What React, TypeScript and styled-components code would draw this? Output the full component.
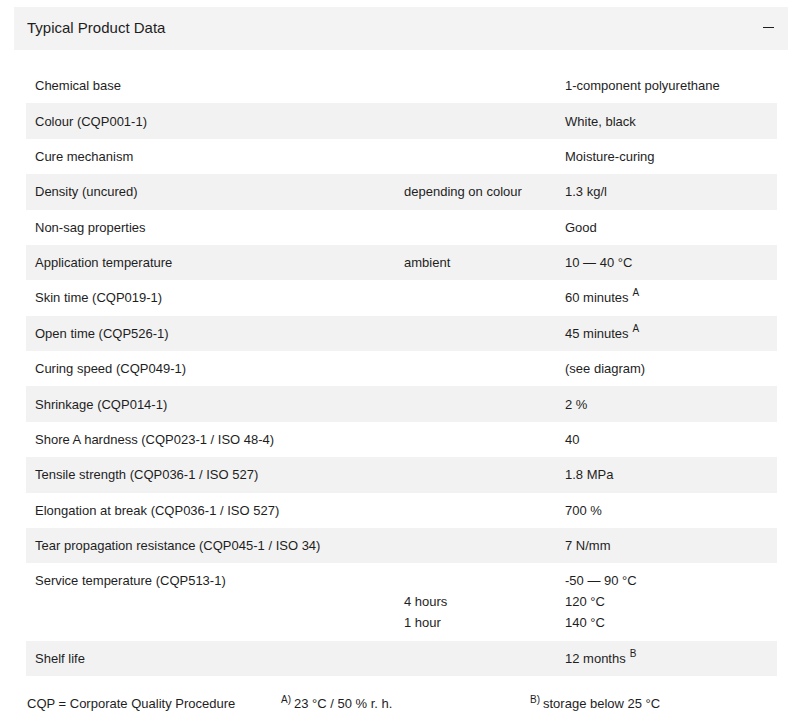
import React from "react";
import styled, { createGlobalStyle } from "styled-components";

const Global = createGlobalStyle`
  html, body { margin: 0; padding: 0; background: #fff; }
  body { font-family: "Liberation Sans", Arial, sans-serif; color: #1e1e1e; }
`;

const Page = styled.div`
  padding: 7px 0 0 14px;
  width: 788px;
  box-sizing: border-box;
`;

const Header = styled.div`
  display: flex;
  align-items: center;
  justify-content: space-between;
  height: 43px;
  background: #f3f3f3;
  padding: 0 14px 2px 13px;
  box-sizing: border-box;
`;

const Title = styled.h2`
  margin: 0;
  font-size: 15px;
  font-weight: normal;
  color: #1e1e1e;
`;

const Toggle = styled.span`
  display: block;
  width: 11px;
  height: 1.5px;
  background: #1e1e1e;
`;

const Table = styled.div`
  margin: 18px 11px 0 12px;
  display: flex;
  flex-direction: column;
`;

const Row = styled.div<{ $shade: boolean }>`
  display: grid;
  grid-template-columns: 369px 161px 1fr;
  background: ${(p) => (p.$shade ? "#f2f2f2" : "#fff")};
  padding: 7.2px 0;
  font-size: 13px;
  line-height: 21px;
`;

const Cell = styled.div`
  padding-left: 9px;
  display: flex;
  flex-direction: column;
`;

const Sup = styled.sup`
  font-size: 10px;
  line-height: 0;
  vertical-align: 6px;
  margin-left: 4px;
`;

const Footer = styled.div`
  display: grid;
  grid-template-columns: 254px 249px 1fr;
  margin: 17px 0 0 13px;
  font-size: 13px;
  line-height: 21px;
`;

const FootSup = styled.sup`
  font-size: 10px;
  line-height: 0;
  vertical-align: 5px;
  margin-right: 3px;
`;

type R = { label: string; cond?: string[]; value: React.ReactNode[] };

const rows: R[] = [
  { label: "Chemical base", value: ["1-component polyurethane"] },
  { label: "Colour (CQP001-1)", value: ["White, black"] },
  { label: "Cure mechanism", value: ["Moisture-curing"] },
  { label: "Density (uncured)", cond: ["depending on colour"], value: ["1.3 kg/l"] },
  { label: "Non-sag properties", value: ["Good"] },
  { label: "Application temperature", cond: ["ambient"], value: ["10 — 40 °C"] },
  { label: "Skin time (CQP019-1)", value: [<>60 minutes<Sup>A</Sup></>] },
  { label: "Open time (CQP526-1)", value: [<>45 minutes<Sup>A</Sup></>] },
  { label: "Curing speed (CQP049-1)", value: ["(see diagram)"] },
  { label: "Shrinkage (CQP014-1)", value: ["2 %"] },
  { label: "Shore A hardness (CQP023-1 / ISO 48-4)", value: ["40"] },
  { label: "Tensile strength (CQP036-1 / ISO 527)", value: ["1.8 MPa"] },
  { label: "Elongation at break (CQP036-1 / ISO 527)", value: ["700 %"] },
  { label: "Tear propagation resistance (CQP045-1 / ISO 34)", value: ["7 N/mm"] },
  {
    label: "Service temperature (CQP513-1)",
    cond: ["\u00a0", "4 hours", "1 hour"],
    value: ["-50 — 90 °C", "120 °C", "140 °C"],
  },
  { label: "Shelf life", value: [<>12 months<Sup>B</Sup></>] },
];

export default function App() {
  return (
    <>
      <Global />
      <Page>
        <Header>
          <Title>Typical Product Data</Title>
          <Toggle />
        </Header>
        <Table>
          {rows.map((r, i) => (
            <Row key={r.label} $shade={i % 2 === 1}>
              <Cell>{r.label}</Cell>
              <Cell>
                {(r.cond ?? []).map((c, j) => (
                  <span key={j}>{c}</span>
                ))}
              </Cell>
              <Cell>
                {r.value.map((v, j) => (
                  <span key={j}>{v}</span>
                ))}
              </Cell>
            </Row>
          ))}
        </Table>
        <Footer>
          <span>CQP = Corporate Quality Procedure</span>
          <span>
            <FootSup>A)</FootSup>23 °C / 50 % r. h.
          </span>
          <span>
            <FootSup>B)</FootSup>storage below 25 °C
          </span>
        </Footer>
      </Page>
    </>
  );
}
